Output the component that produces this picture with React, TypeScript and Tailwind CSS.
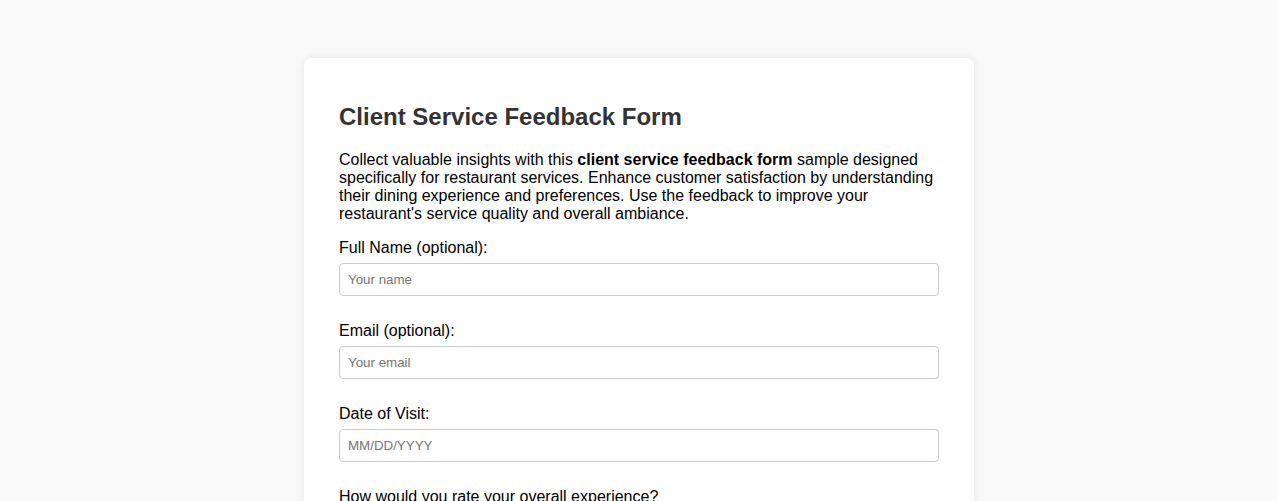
export default function App() {
  const fields = [
    { label: "Full Name (optional):", placeholder: "Your name", type: "text" },
    { label: "Email (optional):", placeholder: "Your email", type: "email" },
    { label: "Date of Visit:", placeholder: "MM/DD/YYYY", type: "text" },
  ];

  return (
    <div
      className="min-h-screen bg-[#f9f9f9] pt-[58px] pb-10"
      style={{ fontFamily: '"Liberation Sans", Arial, sans-serif' }}
    >
      <div className="mx-auto w-[670px] rounded-[8px] bg-white px-[35px] pt-[45px] pb-[35px] shadow-[0_0_10px_rgba(0,0,0,0.08)]">
        <h2 className="text-[24px] font-bold leading-[28px] text-[#333]">
          Client Service Feedback Form
        </h2>
        <p className="mt-[20px] mb-[16px] text-[16px] leading-[18px] text-black">
          Collect valuable insights with this{" "}
          <strong>client service feedback form</strong> sample designed
          specifically for restaurant services. Enhance customer satisfaction
          by understanding their dining experience and preferences. Use the
          feedback to improve your restaurant's service quality and overall
          ambiance.
        </p>
        <form>
          {fields.map((f) => (
            <div key={f.label} className="mb-[26px]">
              <label className="block text-[16px] leading-[18px] text-black">
                {f.label}
              </label>
              <input
                type={f.type}
                placeholder={f.placeholder}
                className="mt-[6px] block h-[33px] w-full rounded-[4px] border border-[#ccc] px-[8px] text-[13.33px] text-black outline-none placeholder:text-[#757575]"
                style={{ fontFamily: '"Liberation Sans", Arial, sans-serif' }}
              />
            </div>
          ))}
          <div className="mb-[25px]">
            <label className="block text-[16px] leading-[18px] text-black">
              How would you rate your overall experience?
            </label>
            <select className="mt-[6px] block h-[33px] w-full rounded-[4px] border border-[#ccc] px-[8px] text-[13.33px]">
              <option>Excellent</option>
              <option>Good</option>
              <option>Average</option>
              <option>Poor</option>
            </select>
          </div>
        </form>
      </div>
    </div>
  );
}
